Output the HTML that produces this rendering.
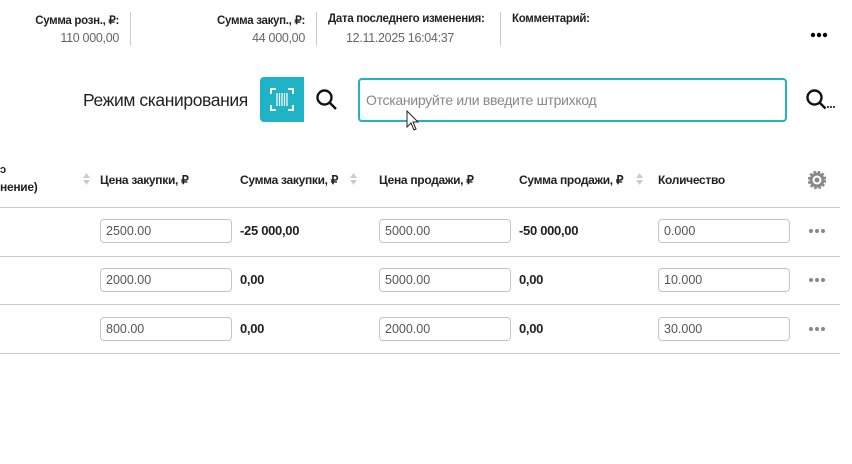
<!DOCTYPE html><html><head><meta charset="utf-8"><style>
body{margin:0;width:852px;height:464px;background:#fff;font-family:"Liberation Sans",sans-serif;position:relative;overflow:hidden;color:#222}
.a{position:absolute;white-space:nowrap}
.l{font-size:11.5px;font-weight:bold;letter-spacing:-.3px}
.v{font-size:12.5px;color:#666;letter-spacing:-.3px}
.sep{position:absolute;width:1px;background:#ccc;top:12px;height:34px}
.h{font-size:12px;font-weight:bold;letter-spacing:-.3px;top:173px}
.in{position:absolute;height:22px;border:1px solid #c4c4c4;border-radius:4px;font-size:12.5px;color:#555;line-height:22px;padding-left:5px;width:125px}
.t{font-size:13px;font-weight:bold;letter-spacing:-.3px}
.hr{position:absolute;left:0;width:840px;height:1px;background:#ccc}
</style></head><body>
<div class="a l" style="right:733px;top:13px">Сумма розн., ₽:</div>
<div class="a v" style="right:733px;top:31px">110 000,00</div>
<div class="sep" style="left:130px"></div>
<div class="a l" style="right:547px;top:13px">Сумма закуп., ₽:</div>
<div class="a v" style="right:547px;top:31px">44 000,00</div>
<div class="sep" style="left:316px"></div>
<div class="a l" style="left:328px;top:13px">Дата последнего изменения:</div>
<div class="a v" style="left:346px;top:31px">12.11.2025 16:04:37</div>
<div class="sep" style="left:500px"></div>
<div class="a l" style="left:512px;top:13px">Комментарий:</div>
<svg class="a" style="left:810px;top:32px" width="18" height="6"><circle cx="3" cy="3" r="2.2"/><circle cx="9" cy="3" r="2.2"/><circle cx="15" cy="3" r="2.2"/></svg>

<div class="a" style="left:83px;top:90px;font-size:17.5px;letter-spacing:-.4px">Режим сканирования</div>
<div class="a" style="left:260px;top:77px;width:44px;height:45px;background:#1fb3c5;border-radius:4px 0 0 4px">
<svg width="44" height="45" fill="none" stroke="#fff" stroke-width="2"><path d="M11 17v-5h5M28 12h5v5M33 28v5h-5M16 33h-5v-5"/><path d="M17 16v13M19.5 16v13M22 16v13M24.5 16v13M27 16v13" stroke-width="1.2"/></svg></div>
<svg class="a" style="left:315px;top:88px" width="24" height="24" fill="none" stroke="#111" stroke-width="2.4"><circle cx="9.5" cy="9.5" r="7"/><path d="M14.5 14.5l6.5 6.5"/></svg>
<div class="a" style="left:358px;top:78px;width:429px;height:44px;border:2px solid #1fb3c5;border-radius:4px;box-sizing:border-box"></div>
<div class="a" style="left:366px;top:92px;font-size:14px;color:#888;letter-spacing:-.3px">Отсканируйте или введите штрихкод</div>
<svg class="a" style="left:406px;top:110px" width="14" height="22"><path d="M1 1v16l4-4 3 7 2-1-3-7h5z" fill="#fff" stroke="#222"/></svg>
<svg class="a" style="left:805px;top:88px" width="30" height="24" fill="none" stroke="#111" stroke-width="2.4"><circle cx="9.5" cy="9.5" r="7"/><path d="M14.5 14.5l6 6"/><circle cx="23" cy="19" r="1" fill="#111" stroke="none"/><circle cx="26" cy="19" r="1" fill="#111" stroke="none"/><circle cx="29" cy="19" r="1" fill="#111" stroke="none"/></svg>

<div class="a h" style="left:0;top:164px;font-size:11px">ɔ</div>
<div class="a h" style="left:0;top:180px">нение)</div>
<svg class="a" style="left:82px;top:172px" width="9" height="14" fill="#ccc"><path d="M1 6l3.5-5 3.5 5zM1 8l3.5 5 3.5-5z"/></svg>
<div class="a h" style="left:100px">Цена закупки, ₽</div>
<div class="a h" style="left:240px">Сумма закупки, ₽</div>
<svg class="a" style="left:349px;top:172px" width="9" height="14" fill="#ccc"><path d="M1 6l3.5-5 3.5 5zM1 8l3.5 5 3.5-5z"/></svg>
<div class="a h" style="left:379px">Цена продажи, ₽</div>
<div class="a h" style="left:519px">Сумма продажи, ₽</div>
<svg class="a" style="left:635px;top:172px" width="9" height="14" fill="#ccc"><path d="M1 6l3.5-5 3.5 5zM1 8l3.5 5 3.5-5z"/></svg>
<div class="a h" style="left:658px">Количество</div>
<svg class="a" style="left:808px;top:171px" width="18" height="18"><circle cx="9" cy="9" r="7.5" fill="#888"/><circle cx="9" cy="9" r="8.3" fill="none" stroke="#888" stroke-width="2" stroke-dasharray="2.6 1.8"/><circle cx="9" cy="9" r="4.5" fill="#fff"/><circle cx="9" cy="9" r="2.5" fill="#888"/></svg>
<div class="hr" style="top:207px"></div>
<div class="hr" style="top:256px"></div>
<div class="hr" style="top:304px"></div>
<div class="hr" style="top:353px"></div>

<div class="in" style="left:100px;top:219px">2500.00</div>
<div class="a t" style="left:240px;top:223px">-25 000,00</div>
<div class="in" style="left:379px;top:219px">5000.00</div>
<div class="a t" style="left:519px;top:223px">-50 000,00</div>
<div class="in" style="left:658px;top:219px">0.000</div>
<svg class="a" style="left:808px;top:228px" width="18" height="6" fill="#888"><circle cx="3" cy="3" r="2"/><circle cx="9" cy="3" r="2"/><circle cx="15" cy="3" r="2"/></svg>

<div class="in" style="left:100px;top:268px">2000.00</div>
<div class="a t" style="left:240px;top:272px">0,00</div>
<div class="in" style="left:379px;top:268px">5000.00</div>
<div class="a t" style="left:519px;top:272px">0,00</div>
<div class="in" style="left:658px;top:268px">10.000</div>
<svg class="a" style="left:808px;top:277px" width="18" height="6" fill="#888"><circle cx="3" cy="3" r="2"/><circle cx="9" cy="3" r="2"/><circle cx="15" cy="3" r="2"/></svg>

<div class="in" style="left:100px;top:317px">800.00</div>
<div class="a t" style="left:240px;top:321px">0,00</div>
<div class="in" style="left:379px;top:317px">2000.00</div>
<div class="a t" style="left:519px;top:321px">0,00</div>
<div class="in" style="left:658px;top:317px">30.000</div>
<svg class="a" style="left:808px;top:326px" width="18" height="6" fill="#888"><circle cx="3" cy="3" r="2"/><circle cx="9" cy="3" r="2"/><circle cx="15" cy="3" r="2"/></svg>
</body></html>
